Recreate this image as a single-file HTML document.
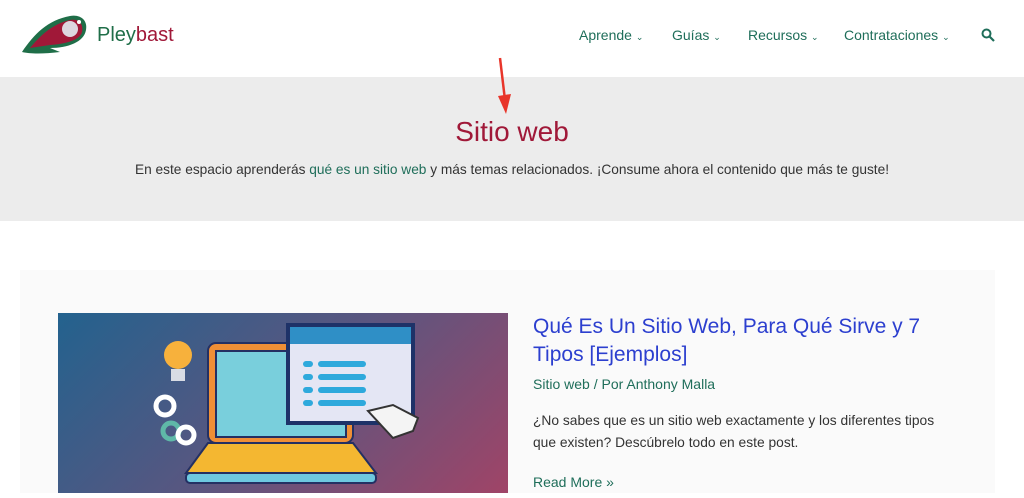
<!DOCTYPE html>
<html><head><meta charset="utf-8"><style>
*{margin:0;padding:0;box-sizing:border-box}
body{width:1024px;height:493px;overflow:hidden;background:#fff;font-family:"Liberation Sans",sans-serif;position:relative}
.abs{position:absolute;white-space:nowrap}
.nav{color:#1f6e5a;font-size:14px;top:27px}
.hero{position:absolute;left:0;top:77px;width:1024px;height:144px;background:#ececec}
.card{position:absolute;left:20px;top:270px;width:975px;height:223px;background:#fafafa}
.img{position:absolute;left:58px;top:313px;width:450px;height:180px;background:linear-gradient(135deg,#23628e 0%,#5a5680 50%,#a04467 100%)}
</style></head><body>
<svg class="abs" style="left:20px;top:12px" width="70" height="42" viewBox="0 0 70 42">
<path d="M2 40 C14 22 28 8 50 4 C60 2 68 8 66 18 C64 30 48 36 30 36 L40 40 C24 42 10 42 2 40Z" fill="#1f6e48"/>
<path d="M10 36 C20 24 32 12 50 8 C58 6 64 12 62 20 C60 28 46 32 30 33Z" fill="#a01838"/>
<circle cx="50" cy="17" r="8" fill="#ddd6e0"/><circle cx="59" cy="10" r="2" fill="#fff"/>
</svg>
<div class="abs" style="left:97px;top:24px;font-size:20px;color:#1f6e48">Pley<span style="color:#a01838">bast</span></div>
<div class="abs nav" style="left:579px">Aprende <span style="font-size:9px">⌄</span></div>
<div class="abs nav" style="left:672px">Guías <span style="font-size:9px">⌄</span></div>
<div class="abs nav" style="left:748px">Recursos <span style="font-size:9px">⌄</span></div>
<div class="abs nav" style="left:844px">Contrataciones <span style="font-size:9px">⌄</span></div>
<svg class="abs" style="left:981px;top:28px" width="14" height="14" viewBox="0 0 14 14"><circle cx="5.5" cy="5.5" r="4" fill="none" stroke="#1f6e5a" stroke-width="2"/><path d="M8.5 8.5L13 13" stroke="#1f6e5a" stroke-width="2.2"/></svg>
<div class="hero"></div>
<svg class="abs" style="left:494px;top:56px" width="20" height="60" viewBox="0 0 20 60"><path d="M6 2 L11 44" stroke="#e8352a" stroke-width="2.5"/><path d="M4 40 L12 58 L17 38Z" fill="#e8352a"/></svg>
<div class="abs" style="left:0;width:1024px;text-align:center;top:116px;font-size:28px;color:#a01838">Sitio web</div>
<div class="abs" style="left:0;width:1024px;text-align:center;top:162px;font-size:13.7px;color:#333">En este espacio aprenderás <span style="color:#1f6e5a">qué es un sitio web</span> y más temas relacionados. ¡Consume ahora el contenido que más te guste!</div>
<div class="card"></div>
<div class="img">
<svg width="450" height="180" viewBox="0 0 450 180">
<rect x="150" y="30" width="145" height="100" rx="8" fill="#ef8f36" stroke="#243063" stroke-width="2"/>
<rect x="158" y="38" width="130" height="86" fill="#79cfdc" stroke="#243063" stroke-width="2"/>
<path d="M128 160 L150 130 L295 130 L318 160Z" fill="#f4b731" stroke="#243063" stroke-width="2"/>
<rect x="128" y="160" width="190" height="10" rx="4" fill="#6ec8e0" stroke="#243063" stroke-width="2"/>
<rect x="230" y="12" width="125" height="98" fill="#e4e6f4" stroke="#1e3268" stroke-width="4"/>
<rect x="232" y="14" width="121" height="17" fill="#2f8fc6"/>
<g fill="#2ea9dc"><rect x="245" y="48" width="10" height="6" rx="3"/><rect x="260" y="48" width="48" height="6" rx="3"/><rect x="245" y="61" width="10" height="6" rx="3"/><rect x="260" y="61" width="48" height="6" rx="3"/><rect x="245" y="74" width="10" height="6" rx="3"/><rect x="260" y="74" width="48" height="6" rx="3"/><rect x="245" y="87" width="10" height="6" rx="3"/><rect x="260" y="87" width="48" height="6" rx="3"/></g>
<path d="M310 98 L335 125 L355 118 L360 105 L335 92Z" fill="#f4f4f4" stroke="#333" stroke-width="2"/>
<circle cx="120" cy="42" r="14" fill="#f7b13c"/><rect x="113" y="56" width="14" height="12" fill="#d8dce4"/>
<circle cx="107" cy="93" r="9" fill="none" stroke="#fff" stroke-width="5"/>
<circle cx="113" cy="118" r="8" fill="none" stroke="#5fb8a8" stroke-width="5"/>
<circle cx="128" cy="122" r="8" fill="none" stroke="#fff" stroke-width="5"/>
</svg></div>
<div class="abs" style="left:533px;top:313px;font-size:21px;line-height:28px;color:#2c3fcf">Qué Es Un Sitio Web, Para Qué Sirve y 7<br>Tipos [Ejemplos]</div>
<div class="abs" style="left:533px;top:376px;font-size:14px;color:#1f6e5a">Sitio web / Por Anthony Malla</div>
<div class="abs" style="left:533px;top:410px;font-size:13.8px;line-height:22px;color:#333">¿No sabes que es un sitio web exactamente y los diferentes tipos<br>que existen? Descúbrelo todo en este post.</div>
<div class="abs" style="left:533px;top:474px;font-size:14px;color:#1f6e5a">Read More »</div>
</body></html>
